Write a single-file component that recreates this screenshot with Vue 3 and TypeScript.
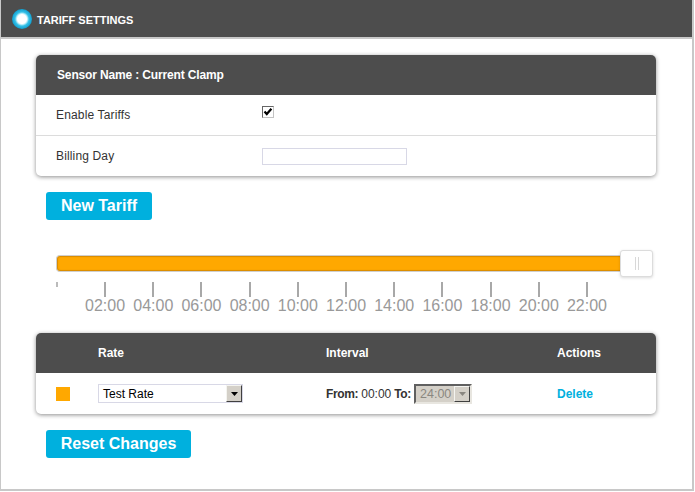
<script setup lang="ts">
const hours: string[] = ['02:00','04:00','06:00','08:00','10:00','12:00','14:00','16:00','18:00','20:00','22:00']
</script>

<template>
  <div class="panel">
    <header class="topbar">
      <span class="logo"></span>
      <h1>TARIFF SETTINGS</h1>
    </header>
    <main class="content">
      <section class="card">
        <div class="card-head sensor">Sensor Name : Current Clamp</div>
        <div class="form-row">
          <label>Enable Tariffs</label>
          <span class="check">
            <svg width="10" height="10" viewBox="0 0 10 10"><path d="M1.5 4.4 L3.8 7 L8.4 1.8" fill="none" stroke="#000" stroke-width="2.2"/></svg>
          </span>
        </div>
        <div class="form-row second">
          <label>Billing Day</label>
          <input class="text" type="text" />
        </div>
      </section>

      <button class="btn new">New Tariff</button>

      <section class="slider">
        <div class="track-wrap">
          <div class="track"></div>
          <div class="handle"><i></i><i></i></div>
        </div>
        <div class="scale">
          <span class="first"></span>
          <div v-for="h in hours" :key="h" class="tick">
            <b></b>
            <span>{{ h }}</span>
          </div>
        </div>
      </section>

      <section class="card rates">
        <div class="card-head grid">
          <span></span>
          <span>Rate</span>
          <span>Interval</span>
          <span>Actions</span>
        </div>
        <div class="rate-row grid">
          <span class="swatch"></span>
          <div class="select">
            <span>Test Rate</span>
            <span class="arrow"><svg width="7" height="4" viewBox="0 0 7 4"><path d="M0 0H7L3.5 4Z" fill="#000"/></svg></span>
          </div>
          <div class="interval">
            <b>From:</b> 00:00 <b>To:</b>
            <div class="select-off">
              <span>24:00</span>
              <span class="arrow-off"><svg width="7" height="4" viewBox="0 0 7 4"><path d="M0 0H7L3.5 4Z" fill="#8a8780"/></svg></span>
            </div>
          </div>
          <a class="del">Delete</a>
        </div>
      </section>

      <button class="btn reset">Reset Changes</button>
    </main>
  </div>
</template>

<style>
html, body { margin: 0; background: #fff; }
</style>

<style scoped>
.panel {
  width: 694px;
  height: 491px;
  box-sizing: border-box;
  border: solid #c8c8c8;
  border-width: 0 2px 2px 1px;
  font-family: "Liberation Sans", Arial, sans-serif;
  font-size: 12px;
  color: #333;
  background: #fff;
  overflow: hidden;
}
.topbar {
  height: 39px;
  box-sizing: border-box;
  background: #4d4d4d;
  border-bottom: 2px solid #c8c8c8;
  display: flex;
  align-items: center;
  padding-left: 11px;
  gap: 5px;
}
.topbar h1 {
  margin: 0;
  font-size: 11px;
  font-weight: bold;
  color: #fff;
  position: relative;
  top: 1px;
}
.logo {
  width: 20px;
  height: 20px;
  border-radius: 50%;
  background: radial-gradient(circle at 50% 50%, #fff 0 4.5px, #bdeef9 5.5px, #35c0e6 7px, #0f9fd0 10px);
}
.content {
  padding: 16px 36px 0 35px;
}
.card {
  border-radius: 5px;
  background: #fff;
  box-shadow: 0 1px 4px rgba(0, 0, 0, 0.45);
  overflow: hidden;
}
.card-head {
  height: 40px;
  background: #4d4d4d;
  color: #fff;
  font-weight: bold;
}
.sensor {
  display: flex;
  align-items: center;
  padding-left: 21px;
  letter-spacing: -0.15px;
}
.form-row {
  height: 40px;
  display: flex;
  align-items: center;
  padding-left: 20px;
}
.form-row.second {
  height: 41px;
  box-sizing: border-box;
  border-top: 1px solid #dcdcdc;
}
.form-row label {
  width: 206px;
  color: #333;
  letter-spacing: 0.15px;
}
.check {
  width: 12px;
  height: 12px;
  box-sizing: border-box;
  border: 1px solid;
  border-color: #666 #c4c4c4 #c4c4c4 #666;
  display: flex;
  align-items: center;
  justify-content: center;
  margin-bottom: 6px;
}
.text {
  width: 145px;
  height: 17px;
  box-sizing: border-box;
  border: 1px solid #d8d8e6;
  padding: 0;
  margin: 0;
  background: #fff;
}
.btn {
  display: block;
  height: 28px;
  border: 0;
  border-radius: 3px;
  background: #00b0de;
  color: #fff;
  font-family: inherit;
  font-size: 16px;
  font-weight: bold;
  padding: 0;
  white-space: nowrap;
  margin-left: 10px;
}
.new { margin-top: 16px; width: 106px; }
.reset { margin-top: 16px; width: 145px; }
.slider {
  margin: 30px 0 0 20px;
}
.track-wrap {
  position: relative;
  height: 27px;
  display: flex;
  align-items: center;
}
.track {
  width: 566px;
  height: 17px;
  box-sizing: border-box;
  background: #ffa800;
  border: 1px solid #cfcfcf;
  border-right: 0;
  border-radius: 4px 0 0 4px;
  box-shadow: inset 0 0 1px 1px rgba(190, 120, 0, 0.6);
}
.handle {
  position: absolute;
  left: 564px;
  top: 0;
  width: 33px;
  height: 27px;
  box-sizing: border-box;
  background: #fff;
  border: 1px solid #dcdcdc;
  border-radius: 3px;
  box-shadow: 0 1px 3px rgba(0, 0, 0, 0.15);
  display: flex;
  align-items: center;
  justify-content: center;
  gap: 2px;
}
.handle i {
  width: 1px;
  height: 13px;
  background: #d8d8d8;
}
.scale {
  display: flex;
  align-items: flex-start;
  margin-top: 5px;
  height: 34px;
}
.first {
  width: 2px;
  height: 5px;
  background: #bbb;
  margin-left: 0;
  margin-right: 23px;
}
.tick {
  width: 48.2px;
  flex: none;
  display: flex;
  flex-direction: column;
  align-items: center;
}
.tick b {
  width: 2px;
  height: 15px;
  background: #a8a8a8;
}
.tick span {
  font-size: 16px;
  line-height: 18px;
  color: #999;
}
.rates {
  margin-top: 17px;
}
.grid {
  display: grid;
  grid-template-columns: 62px 228px 231px 1fr;
  align-items: center;
}
.rate-row {
  height: 41px;
}
.swatch {
  width: 14px;
  height: 14px;
  background: #ffa800;
  margin-left: 20px;
}
.select {
  width: 145px;
  height: 19px;
  box-sizing: border-box;
  border: 1px solid #d8d8e6;
  display: flex;
  align-items: center;
  justify-content: space-between;
  padding-left: 4px;
  color: #000;
}
.arrow {
  width: 16px;
  height: 17px;
  box-sizing: border-box;
  background: #d4d0c8;
  border: 1px solid;
  border-color: #f4f4f0 #404040 #404040 #f4f4f0;
  display: flex;
  align-items: center;
  justify-content: center;
}
.interval {
  display: flex;
  align-items: center;
  gap: 3px;
  color: #333;
}
.interval b {
  letter-spacing: -0.35px;
}
.select-off {
  width: 58px;
  height: 20px;
  box-sizing: border-box;
  background: #d4d0c8;
  border: 2px solid;
  border-color: #606060 #e8e6e0 #e8e6e0 #606060;
  display: flex;
  align-items: center;
  justify-content: space-between;
  padding-left: 4px;
  color: #8a8780;
  font-size: 12.5px;
}
.arrow-off {
  width: 16px;
  height: 16px;
  box-sizing: border-box;
  background: #d4d0c8;
  border: 1px solid;
  border-color: #f4f4f0 #404040 #404040 #f4f4f0;
  display: flex;
  align-items: center;
  justify-content: center;
}
.del {
  color: #00b0de;
  font-weight: bold;
}
</style>
